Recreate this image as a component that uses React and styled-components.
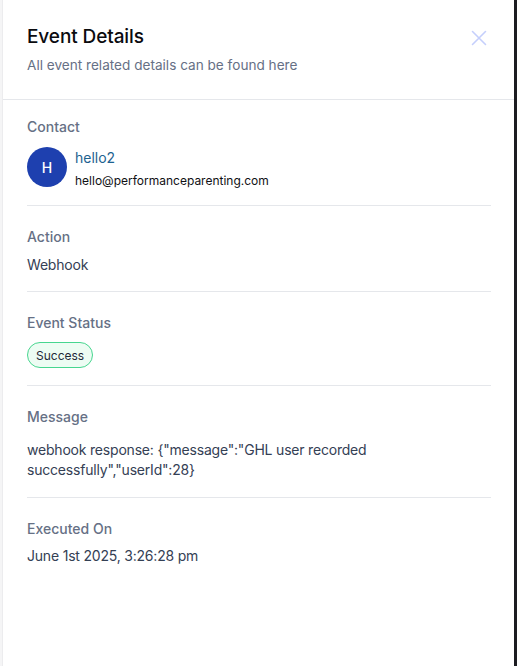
import React from "react";
import styled, { createGlobalStyle } from "styled-components";

const Global = createGlobalStyle`
  html, body { margin: 0; padding: 0; height: 100%; }
  body { font-family: Inter, "Noto Sans", sans-serif; background: #f4f4f5; }
  #root { height: 100%; }
`;

const Frame = styled.div`
  display: flex;
  height: 666px;
  width: 517px;
`;

const BackStrip = styled.div`
  width: 3px;
  background: #f5f5f6;
  border-right: 1px solid #ececee;
  box-sizing: border-box;
`;

const Panel = styled.div`
  flex: 1;
  background: #ffffff;
  display: flex;
  flex-direction: column;
`;

const EdgeStrip = styled.div`
  width: 3px;
  background: #1c1c21;
`;

const Header = styled.header`
  display: flex;
  justify-content: space-between;
  align-items: flex-start;
  padding: 25px 24px 0 24px;
  height: 74px;
  border-bottom: 1px solid #e5e7eb;
`;

const TitleBlock = styled.div`
  display: flex;
  flex-direction: column;
  gap: 6px;
`;

const Title = styled.h2`
  margin: 0;
  font-size: 19px;
  line-height: 24px;
  font-weight: 500;
  color: #0b0b0f;
  letter-spacing: -0.1px;
`;

const Subtitle = styled.p`
  margin: 0;
  font-size: 13.6px;
  line-height: 20px;
  color: #667085;
`;

const CloseButton = styled.button`
  border: none;
  background: none;
  padding: 0;
  margin-top: 5px;
  margin-right: 3px;
  width: 16px;
  height: 16px;
  color: #c5cffc;
  display: flex;
  cursor: pointer;
`;

const Body = styled.div`
  padding: 0 23px 0 24px;
  display: flex;
  flex-direction: column;
`;

const Section = styled.section`
  padding: ${(p) => (p.$first ? "17px" : "21px")} 0 ${(p) => p.$pb || "16px"} 0;
  border-bottom: ${(p) => (p.$last ? "none" : "1px solid #e5e7eb")};
`;

const Label = styled.div`
  font-size: 14px;
  line-height: 20px;
  font-weight: 500;
  color: #667085;
`;

const Value = styled.div`
  margin-top: ${(p) => p.$mt || "8px"};
  font-size: 14px;
  line-height: 20px;
  color: #344054;
  letter-spacing: -0.2px;
`;

const ContactRow = styled.div`
  margin-top: 10px;
  display: flex;
  align-items: flex-start;
  gap: 8px;
`;

const Avatar = styled.div`
  width: 40px;
  height: 40px;
  border-radius: 50%;
  background: #1e40af;
  color: #fff;
  font-size: 14px;
  font-weight: 500;
  display: flex;
  align-items: center;
  justify-content: center;
`;

const ContactInfo = styled.div`
  padding-top: 2px;
  display: flex;
  flex-direction: column;
  gap: 6px;
`;

const ContactName = styled.a`
  font-size: 14px;
  line-height: 18px;
  color: #1d6290;
  text-decoration: none;
`;

const ContactEmail = styled.span`
  font-size: 12px;
  line-height: 16px;
  color: #101014;
`;

const Badge = styled.div`
  margin-top: 9px;
  display: flex;
  width: fit-content;
  align-items: center;
  height: 26px;
  box-sizing: border-box;
  padding: 0 8px;
  border: 1px solid #47d68f;
  background: #edfcf3;
  border-radius: 999px;
  font-size: 12px;
  color: #1f2937;
`;

export default function App() {
  return (
    <>
      <Global />
      <Frame>
        <BackStrip />
        <Panel>
          <Header>
            <TitleBlock>
              <Title>Event Details</Title>
              <Subtitle>All event related details can be found here</Subtitle>
            </TitleBlock>
            <CloseButton aria-label="Close">
              <svg viewBox="0 0 16 16" width="16" height="16" fill="none" stroke="currentColor" strokeWidth="1.6" strokeLinecap="round">
                <path d="M1.5 1.5L14.5 14.5M14.5 1.5L1.5 14.5" />
              </svg>
            </CloseButton>
          </Header>
          <Body>
            <Section $first>
              <Label>Contact</Label>
              <ContactRow>
                <Avatar>H</Avatar>
                <ContactInfo>
                  <ContactName href="#">hello2</ContactName>
                  <ContactEmail>hello@performanceparenting.com</ContactEmail>
                </ContactInfo>
              </ContactRow>
            </Section>
            <Section>
              <Label>Action</Label>
              <Value>Webhook</Value>
            </Section>
            <Section $pb="17px">
              <Label>Event Status</Label>
              <Badge>Success</Badge>
            </Section>
            <Section $pb="17px">
              <Label>Message</Label>
              <Value $mt="13px">
                webhook response: {'{"message":"GHL user recorded successfully","userId":28}'}
              </Value>
            </Section>
            <Section $last>
              <Label>Executed On</Label>
              <Value $mt="7px">June 1st 2025, 3:26:28 pm</Value>
            </Section>
          </Body>
        </Panel>
        <EdgeStrip />
      </Frame>
    </>
  );
}
